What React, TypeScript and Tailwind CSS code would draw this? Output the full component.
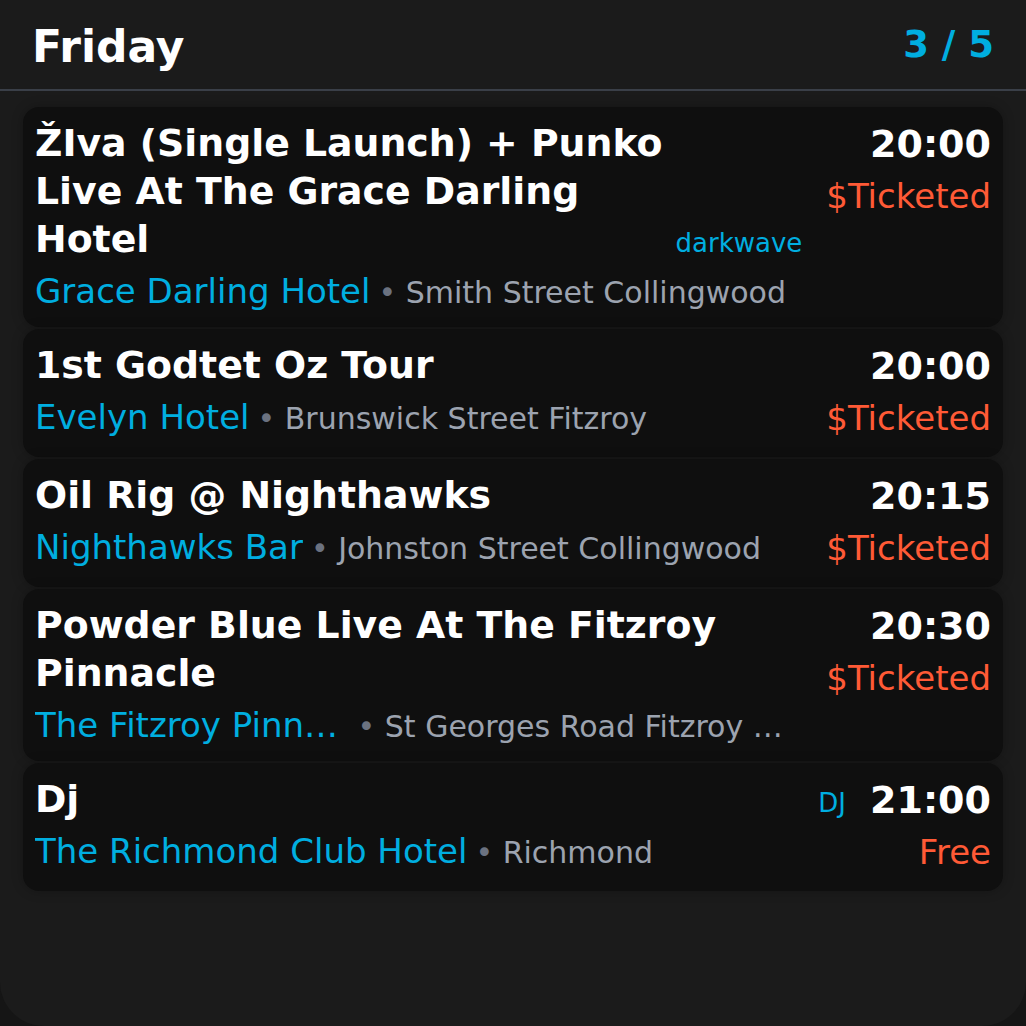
import React from "react";

type Gig = {
  title: string;
  venue: string;
  address: string;
  time: string;
  price: string;
  tag?: string;
};

const gigs: Gig[] = [
  {
    title: "ŽIva (Single Launch) + Punko Live At The Grace Darling Hotel",
    venue: "Grace Darling Hotel",
    address: "Smith Street Collingwood",
    time: "20:00",
    price: "$Ticketed",
    tag: "darkwave",
  },
  {
    title: "1st Godtet Oz Tour",
    venue: "Evelyn Hotel",
    address: "Brunswick Street Fitzroy",
    time: "20:00",
    price: "$Ticketed",
  },
  {
    title: "Oil Rig @ Nighthawks",
    venue: "Nighthawks Bar",
    address: "Johnston Street Collingwood",
    time: "20:15",
    price: "$Ticketed",
  },
  {
    title: "Powder Blue Live At The Fitzroy Pinnacle",
    venue: "The Fitzroy Pinnacle",
    address: "St Georges Road Fitzroy North",
    time: "20:30",
    price: "$Ticketed",
  },
  {
    title: "Dj",
    venue: "The Richmond Club Hotel",
    address: "Richmond",
    time: "21:00",
    price: "Free",
    tag: "DJ",
  },
];

function GigCard({ gig }: { gig: Gig }) {
  return (
    <div className="flex gap-6 rounded-2xl bg-[#0f0f0f] px-3 py-3 shadow-[0_0_12px_rgba(0,0,0,0.25)]">
      <div className="flex min-w-0 flex-1 flex-col">
        <div className="flex items-end gap-2">
          <h3 className="min-w-0 flex-1 text-[37.8px] font-bold leading-[48px] text-white">
            {gig.title}
          </h3>
          {gig.tag && (
            <span className="shrink-0 text-[26px] leading-[40px] text-[#00aee0]">
              {gig.tag}
            </span>
          )}
        </div>
        <div className="flex h-[52px] min-w-0 items-baseline gap-2 pt-[2px] leading-[52px]">
          <span className="min-w-0 truncate text-[34px] text-[#00aee0]">{gig.venue}</span>
          <span className="min-w-0 truncate text-[30px] text-[#9ca3af]">
            <span className="text-[#6b7280]">•</span> {gig.address}
          </span>
        </div>
      </div>
      <div className="flex shrink-0 flex-col items-end">
        <span className="text-[38px] font-bold leading-[50px] text-white">{gig.time}</span>
        <span className="text-[34px] leading-[54px] text-[#ff5a36]">{gig.price}</span>
      </div>
    </div>
  );
}

export default function App() {
  return (
    <div
      className="min-h-screen bg-[#151515]"
      style={{ fontFamily: '"DejaVu Sans", sans-serif' }}
    >
      <div className="h-[1026px] rounded-b-[44px] bg-[#1b1b1b]">
        <header className="flex h-[91px] items-center justify-between border-b-2 border-[#3a3f48] px-8">
          <h1 className="pt-1 text-[44px] font-bold text-white">Friday</h1>
          <span className="text-[37px] font-bold text-[#00aee0]">3 / 5</span>
        </header>
        <div className="flex flex-col gap-[2px] px-[23px] pt-[16px]">
          {gigs.map((gig) => (
            <GigCard key={gig.title} gig={gig} />
          ))}
        </div>
      </div>
    </div>
  );
}
